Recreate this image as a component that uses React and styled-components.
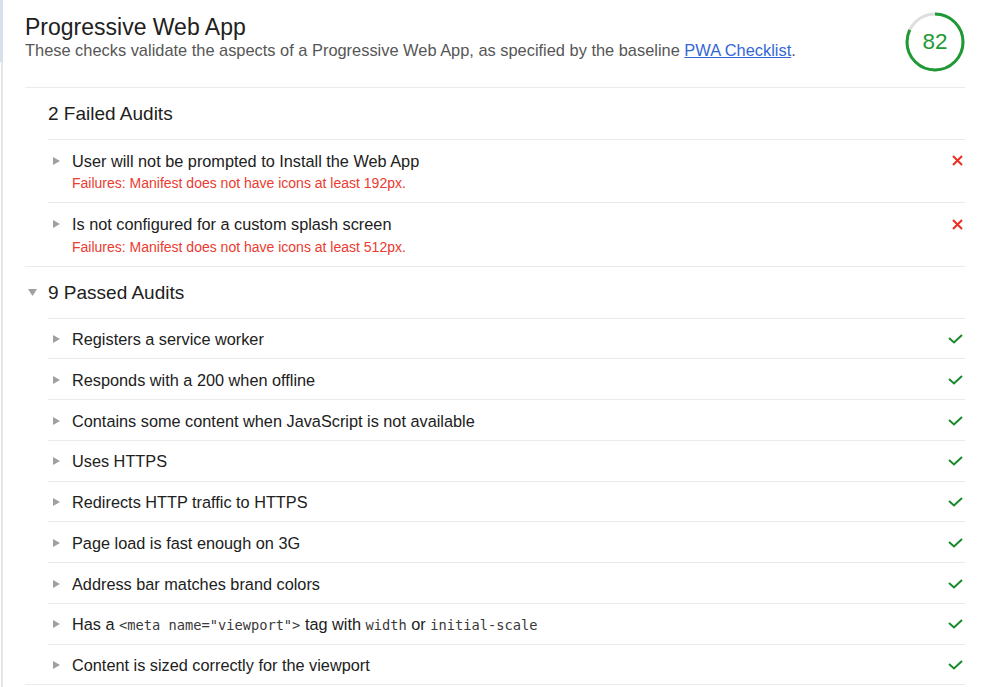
import React from 'react';
import styled, { createGlobalStyle } from 'styled-components';

const GlobalStyle = createGlobalStyle`
  html, body {
    margin: 0;
    padding: 0;
    background: #fff;
  }
  body {
    font-family: "Liberation Sans", Arial, sans-serif;
    color: #212121;
  }
`;

const failed = [
  {
    title: 'User will not be prompted to Install the Web App',
    debug: 'Failures: Manifest does not have icons at least 192px.',
  },
  {
    title: 'Is not configured for a custom splash screen',
    debug: 'Failures: Manifest does not have icons at least 512px.',
  },
];

const passed = [
  'Registers a service worker',
  'Responds with a 200 when offline',
  'Contains some content when JavaScript is not available',
  'Uses HTTPS',
  'Redirects HTTP traffic to HTTPS',
  'Page load is fast enough on 3G',
  'Address bar matches brand colors',
  'viewport',
  'Content is sized correctly for the viewport',
];

const RightArrow = () => (
  <svg width="7" height="8" viewBox="0 0 7 8">
    <polygon points="0,0 7,4 0,8" fill="#a0a0a0" />
  </svg>
);

const DownArrow = () => (
  <svg width="9" height="7" viewBox="0 0 9 7">
    <polygon points="0,0 9,0 4.5,7" fill="#a0a0a0" />
  </svg>
);

const FailIcon = () => (
  <svg width="11" height="11" viewBox="0 0 11 11">
    <path d="M1 1 L10 10 M10 1 L1 10" stroke="#eb2f24" strokeWidth="2" fill="none" />
  </svg>
);

const PassIcon = () => (
  <svg width="15" height="10" viewBox="0 0 15 10">
    <polyline points="1,4 6,8.5 14,1" stroke="#178a2c" strokeWidth="2" fill="none" />
  </svg>
);

const Gauge = ({ score }) => {
  const r = 28;
  const c = 2 * Math.PI * r;
  return (
    <GaugeWrap>
      <svg width="60" height="60" viewBox="0 0 60 60">
        <circle cx="30" cy="30" r={r} fill="none" stroke="#dedede" strokeWidth="3" />
        <circle
          cx="30"
          cy="30"
          r={r}
          fill="none"
          stroke="#1e9a35"
          strokeWidth="3"
          strokeDasharray={`${(c * score) / 100} ${c}`}
          transform="rotate(-90 30 30)"
        />
      </svg>
      <GaugeValue>{score}</GaugeValue>
    </GaugeWrap>
  );
};

const App = () => {
  return (
    <Page>
      <GlobalStyle />
      <Header>
        <HeaderText>
          <Title>Progressive Web App</Title>
          <Description>
            These checks validate the aspects of a Progressive Web App, as specified by the baseline{' '}
            <a href="#">PWA Checklist</a>.
          </Description>
        </HeaderText>
        <Gauge score={82} />
      </Header>

      <Group>
        <GroupHeader>
          <ArrowSlot />
          2 Failed Audits
        </GroupHeader>
        <Items>
          {failed.map((a) => (
            <Audit key={a.title}>
              <ItemArrow><RightArrow /></ItemArrow>
              <AuditBody>
                <AuditTitle>{a.title}</AuditTitle>
                <Debug>{a.debug}</Debug>
              </AuditBody>
              <Status><FailIcon /></Status>
            </Audit>
          ))}
        </Items>
      </Group>

      <Group>
        <GroupHeader>
          <ArrowSlot><DownArrow /></ArrowSlot>
          9 Passed Audits
        </GroupHeader>
        <Items>
          {passed.map((t) => (
            <Audit key={t} $compact>
              <ItemArrow><RightArrow /></ItemArrow>
              <AuditBody>
                <AuditTitle>
                  {t === 'viewport' ? (
                    <>
                      Has a <Code>&lt;meta name="viewport"&gt;</Code> tag with <Code>width</Code> or{' '}
                      <Code>initial-scale</Code>
                    </>
                  ) : (
                    t
                  )}
                </AuditTitle>
              </AuditBody>
              <Status><PassIcon /></Status>
            </Audit>
          ))}
        </Items>
      </Group>
    </Page>
  );
};

const Page = styled.div`
  position: relative;
  min-height: 100vh;
  margin-left: 1px;
  border-left: 2px solid #e6e6e6;
  padding: 0 23px 0 22px;
  box-sizing: border-box;
  &::before {
    content: '';
    position: absolute;
    left: -3px;
    top: 0;
    width: 3px;
    height: 62px;
    background: #d6e1ec;
  }
`;

const Header = styled.div`
  display: flex;
  justify-content: space-between;
  align-items: flex-start;
  padding: 12px 0 15px;
  border-bottom: 1px solid #ebebeb;
`;

const HeaderText = styled.div`
  padding-top: 2px;
`;

const Title = styled.h1`
  margin: 0;
  font-size: 23px;
  line-height: 26px;
  font-weight: normal;
  color: #212121;
`;

const Description = styled.div`
  font-size: 16.4px;
  line-height: 20px;
  color: #565656;
  a {
    color: #3367d6;
  }
`;

const GaugeWrap = styled.div`
  position: relative;
  width: 60px;
  height: 60px;
  svg {
    display: block;
  }
`;

const GaugeValue = styled.div`
  position: absolute;
  inset: 0;
  display: flex;
  align-items: center;
  justify-content: center;
  font-size: 22.5px;
  color: #1e9a35;
`;

const Group = styled.div`
  border-bottom: 1px solid #ebebeb;
`;

const GroupHeader = styled.div`
  display: flex;
  align-items: center;
  padding: 14px 0 13px;
  font-size: 19px;
  line-height: 24px;
  color: #212121;
`;

const ArrowSlot = styled.span`
  width: 23px;
  display: flex;
  align-items: center;
  padding-left: 3px;
  box-sizing: border-box;
`;

const Items = styled.div`
  margin-left: 23px;
`;

const Audit = styled.div`
  display: grid;
  grid-template-columns: 24px 1fr auto;
  border-top: 1px solid #ebebeb;
  padding: ${(p) => (p.$compact ? '10.5px 0 9.25px' : '10.75px 0 11px')};
`;

const ItemArrow = styled.span`
  height: 20px;
  display: flex;
  align-items: center;
  padding-left: 5px;
`;

const AuditBody = styled.div`
  display: flex;
  flex-direction: column;
  gap: 4.5px;
`;

const AuditTitle = styled.div`
  height: 20px;
  font-size: 16.3px;
  line-height: 20px;
  color: #212121;
`;

const Debug = styled.div`
  font-size: 14px;
  line-height: 16px;
  color: #eb3b30;
`;

const Code = styled.code`
  font-family: "DejaVu Sans Mono", "Liberation Mono", monospace;
  font-size: 13.7px;
  line-height: 1;
  color: #3a3a3a;
`;

const Status = styled.span`
  height: 20px;
  display: flex;
  align-items: center;
  padding-right: 2px;
`;

export default App;
